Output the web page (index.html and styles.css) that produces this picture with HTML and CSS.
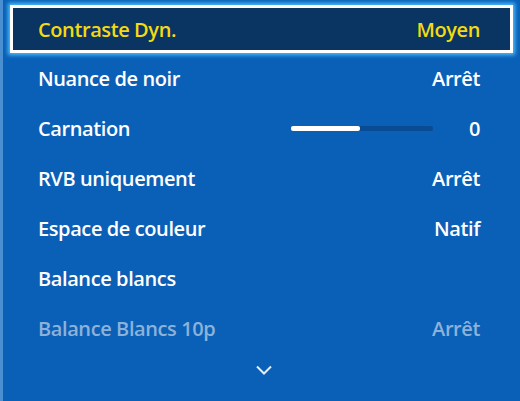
FILE: index.html
```html
<!DOCTYPE html>
<html lang="fr">
<head>
<meta charset="utf-8">
<link rel="stylesheet" href="styles.css">
</head>
<body>
<div class="menu">
  <div class="row focus"><span class="label">Contraste Dyn.</span><span class="value">Moyen</span></div>
  <div class="row"><span class="label">Nuance de noir</span><span class="value">Arrêt</span></div>
  <div class="row"><span class="label">Carnation</span><span class="slider"><span class="track"><span class="fill"></span></span><span class="num">0</span></span></div>
  <div class="row"><span class="label">RVB uniquement</span><span class="value">Arrêt</span></div>
  <div class="row"><span class="label">Espace de couleur</span><span class="value">Natif</span></div>
  <div class="row"><span class="label">Balance blancs</span></div>
  <div class="row disabled"><span class="label">Balance Blancs 10p</span><span class="value">Arrêt</span></div>
  <div class="more">
    <svg width="20" height="12" viewBox="0 0 20 12"><path d="M3 2.5 L10 9.5 L17 2.5" fill="none" stroke="#e6eef8" stroke-width="2"/></svg>
  </div>
</div>
</body>
</html>
```
FILE: styles.css
```css
html, body {
  margin: 0;
  padding: 0;
}
body {
  width: 520px;
  height: 401px;
  overflow: hidden;
  background: #0a60b7;
  font-family: "Open Sans", "Noto Sans", sans-serif;
}
.menu {
  height: 401px;
  box-sizing: border-box;
  border-left: 3px solid #4a8fd2;
  padding-top: 5px;
  display: flex;
  flex-direction: column;
}
.row {
  height: 50px;
  display: flex;
  align-items: center;
  justify-content: space-between;
  padding: 0 40px 0 35px;
  color: #ffffff;
  font-size: 20px;
  font-weight: 600;
  letter-spacing: -0.4px;
  flex-shrink: 0;
}
.row.focus {
  height: 48px;
  box-sizing: border-box;
  margin-left: 7px;
  width: 503px;
  border: 3px solid #ffffff;
  background: #0a3462;
  color: #f4da12;
  padding: 0 30px 0 25px;
  box-shadow: 0 0 4px 2px #4cc0ff;
}
.row.disabled {
  color: #8cb2da;
}
.slider {
  display: flex;
  align-items: center;
}
.track {
  width: 142px;
  height: 5px;
  background: #0a4c93;
  border-radius: 2px;
  margin-right: 36px;
  display: flex;
}
.fill {
  width: 69px;
  height: 5px;
  background: #ffffff;
  border-radius: 2px;
}
.more {
  flex: 1;
  display: flex;
  justify-content: center;
  padding-top: 11px;
  padding-left: 4px;
}
```
